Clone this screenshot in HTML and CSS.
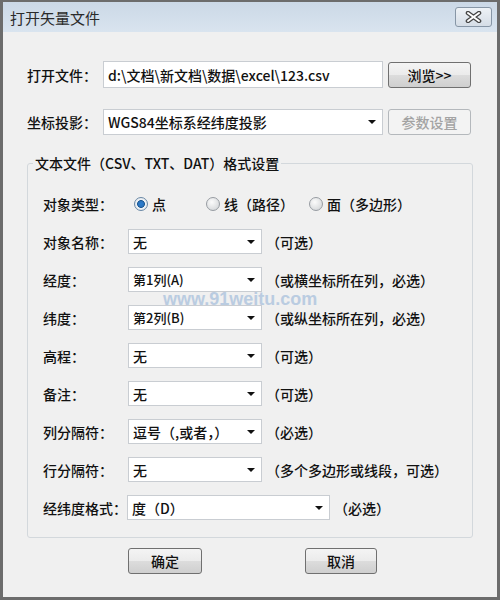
FILE: index.html
```html
<!DOCTYPE html>
<html>
<head>
<meta charset="utf-8">
<link rel="stylesheet" href="styles.css">
</head>
<body>
<div class="window">
  <div class="titlebar">
    <span class="title">打开矢量文件</span>
    <span class="close">
      <svg width="17" height="12" viewBox="0 0 17 12"><path d="M3 2 L14 10 M14 2 L3 10" stroke="#454545" stroke-width="4.6" stroke-linecap="round" fill="none"/><path d="M3 2 L14 10 M14 2 L3 10" stroke="#ffffff" stroke-width="2" stroke-linecap="round" fill="none"/></svg>
    </span>
  </div>
  <div class="content">
    <div class="toprow">
      <span class="toplabel">打开文件：</span>
      <div class="field wide">d:\文档\新文档\数据\excel\123.csv</div>
      <button class="btn side">浏览&gt;&gt;</button>
    </div>
    <div class="toprow second">
      <span class="toplabel">坐标投影：</span>
      <div class="field wide select"><span>WGS84坐标系经纬度投影</span><i class="arrow"></i></div>
      <button class="btn side disabled">参数设置</button>
    </div>
    <fieldset class="group">
      <legend>文本文件（CSV、TXT、DAT）格式设置</legend>
      <div class="rows">
        <div class="row">
          <span class="label">对象类型：</span>
          <span class="opt opt1"><i class="radio on"></i>点</span>
          <span class="opt opt2"><i class="radio"></i>线（路径）</span>
          <span class="opt"><i class="radio"></i>面（多边形）</span>
        </div>
        <div class="row">
          <span class="label">对象名称：</span>
          <div class="field select"><span>无</span><i class="arrow"></i></div>
          <span class="hint">（可选）</span>
        </div>
        <div class="row">
          <span class="label">经度：</span>
          <div class="field select"><span class="small">第1列(A)</span><i class="arrow"></i></div>
          <span class="hint">（或横坐标所在列，必选）</span>
        </div>
        <div class="row">
          <span class="label">纬度：</span>
          <div class="field select"><span class="small">第2列(B)</span><i class="arrow"></i></div>
          <span class="hint">（或纵坐标所在列，必选）</span>
        </div>
        <div class="row">
          <span class="label">高程：</span>
          <div class="field select"><span>无</span><i class="arrow"></i></div>
          <span class="hint">（可选）</span>
        </div>
        <div class="row">
          <span class="label">备注：</span>
          <div class="field select"><span>无</span><i class="arrow"></i></div>
          <span class="hint">（可选）</span>
        </div>
        <div class="row">
          <span class="label">列分隔符：</span>
          <div class="field select"><span>逗号（,或者，）</span><i class="arrow"></i></div>
          <span class="hint">（必选）</span>
        </div>
        <div class="row">
          <span class="label">行分隔符：</span>
          <div class="field select"><span>无</span><i class="arrow"></i></div>
          <span class="hint">（多个多边形或线段，可选）</span>
        </div>
        <div class="row">
          <span class="label lastlabel">经纬度格式：</span>
          <div class="field select long"><span>度（D）</span><i class="arrow"></i></div>
          <span class="hint">（必选）</span>
        </div>
      </div>
    </fieldset>
    <div class="actions">
      <button class="btn action">确定</button>
      <button class="btn action">取消</button>
    </div>
  </div>
  <div class="watermark">www.91weitu.com</div>
</div>
</body>
</html>
```
FILE: styles.css
```css
html, body {
  margin: 0;
  padding: 0;
  background: #ffffff;
}
body {
  font-family: "Noto Sans CJK SC", "Noto Sans", sans-serif;
  font-size: 14px;
  font-weight: 500;
  color: #111111;
}
.window {
  position: relative;
  width: 500px;
  height: 600px;
  box-sizing: border-box;
  border: 3px solid #6c6c6c;
  border-top-width: 2px;
  background: #f0f0f0;
  display: flex;
  flex-direction: column;
}
.titlebar {
  height: 30px;
  flex: none;
  display: flex;
  align-items: center;
  justify-content: space-between;
  padding: 0 5px 0 7px;
  background: linear-gradient(#cbd8e6, #d9e4ef);
}
.title {
  font-size: 15px;
  font-weight: 400;
  color: #2a2a2a;
  line-height: 20px;
  padding-top: 2px;
}
.close {
  width: 35px;
  height: 18px;
  border: 1px solid #8796a6;
  border-radius: 3px;
  background: linear-gradient(#eef2f6, #d5dde6);
  display: flex;
  align-items: center;
  justify-content: center;
}
.content {
  flex: 1;
  padding: 29px 24px 0 24px;
  display: flex;
  flex-direction: column;
}
.toprow {
  display: flex;
  align-items: center;
  height: 27px;
}
.toprow.second {
  margin-top: 21px;
  height: 26px;
}
.toplabel {
  width: 76px;
  flex: none;
}
.field {
  box-sizing: border-box;
  background: #ffffff;
  border: 1px solid #c9cdd2;
  height: 25px;
  width: 134px;
  padding: 0 4px;
  display: flex;
  align-items: center;
  justify-content: space-between;
  white-space: nowrap;
  flex: none;
}
.field.wide {
  width: 280px;
  height: 100%;
}
.field.long {
  width: 203px;
}
.small {
  font-size: 13px;
}
.arrow {
  width: 0;
  height: 0;
  border-left: 4px solid transparent;
  border-right: 4px solid transparent;
  border-top: 4px solid #111111;
  margin-right: 2px;
}
.btn {
  font-family: inherit;
  font-size: 14px;
  font-weight: 500;
  color: #111111;
  box-sizing: border-box;
  border: 1px solid #707070;
  border-radius: 3px;
  background: linear-gradient(#f4f4f4 0%, #ebebeb 50%, #dcdcdc 52%, #cfcfcf 100%);
  padding: 0;
  display: flex;
  align-items: center;
  justify-content: center;
}
.btn.side {
  width: 83px;
  height: 26px;
  margin-left: 5px;
}
.btn.disabled {
  color: #a3a3a3;
  border-color: #b4b8bc;
  background: #f3f3f3;
}
.group {
  margin: 18px 0 0 0;
  padding: 18px 0 17px 15px;
  border: 1px solid #d3d8dc;
  border-radius: 3px;
}
.group legend {
  padding: 0 2px;
  margin-left: -10px;
  line-height: 20px;
}
.rows {
  display: flex;
  flex-direction: column;
  gap: 13px;
}
.row {
  display: flex;
  align-items: center;
  height: 25px;
}
.label {
  width: 85px;
  flex: none;
}
.lastlabel {
  width: 84px;
}
.hint {
  margin-left: 4px;
}
.opt {
  display: flex;
  align-items: center;
  flex: none;
}
.opt1 {
  margin-left: 6px;
  width: 72px;
}
.opt2 {
  width: 103px;
}
.radio {
  width: 12px;
  height: 12px;
  border-radius: 50%;
  border: 1px solid #979ca2;
  background: radial-gradient(circle at 40% 35%, #fbfbfb, #cdd0d3);
  margin-right: 4px;
  flex: none;
}
.radio.on {
  border-color: #6a88a5;
  background: radial-gradient(circle at 50% 50%, #2c7fd0 0, #2a74c0 2.5px, #1f5a92 3.6px, #eef2f6 4.2px, #dde2e7 100%);
}
.actions {
  display: flex;
  margin-top: 10px;
  padding-left: 101px;
}
.btn.action {
  width: 74px;
  height: 26px;
}
.btn.action + .btn.action {
  margin-left: 103px;
  width: 72px;
}
.watermark {
  position: absolute;
  left: 160px;
  top: 287px;
  font-family: "Liberation Sans", Arial, sans-serif;
  font-weight: bold;
  font-size: 18px;
  color: #adc4de;
  opacity: 0.8;
}
```
